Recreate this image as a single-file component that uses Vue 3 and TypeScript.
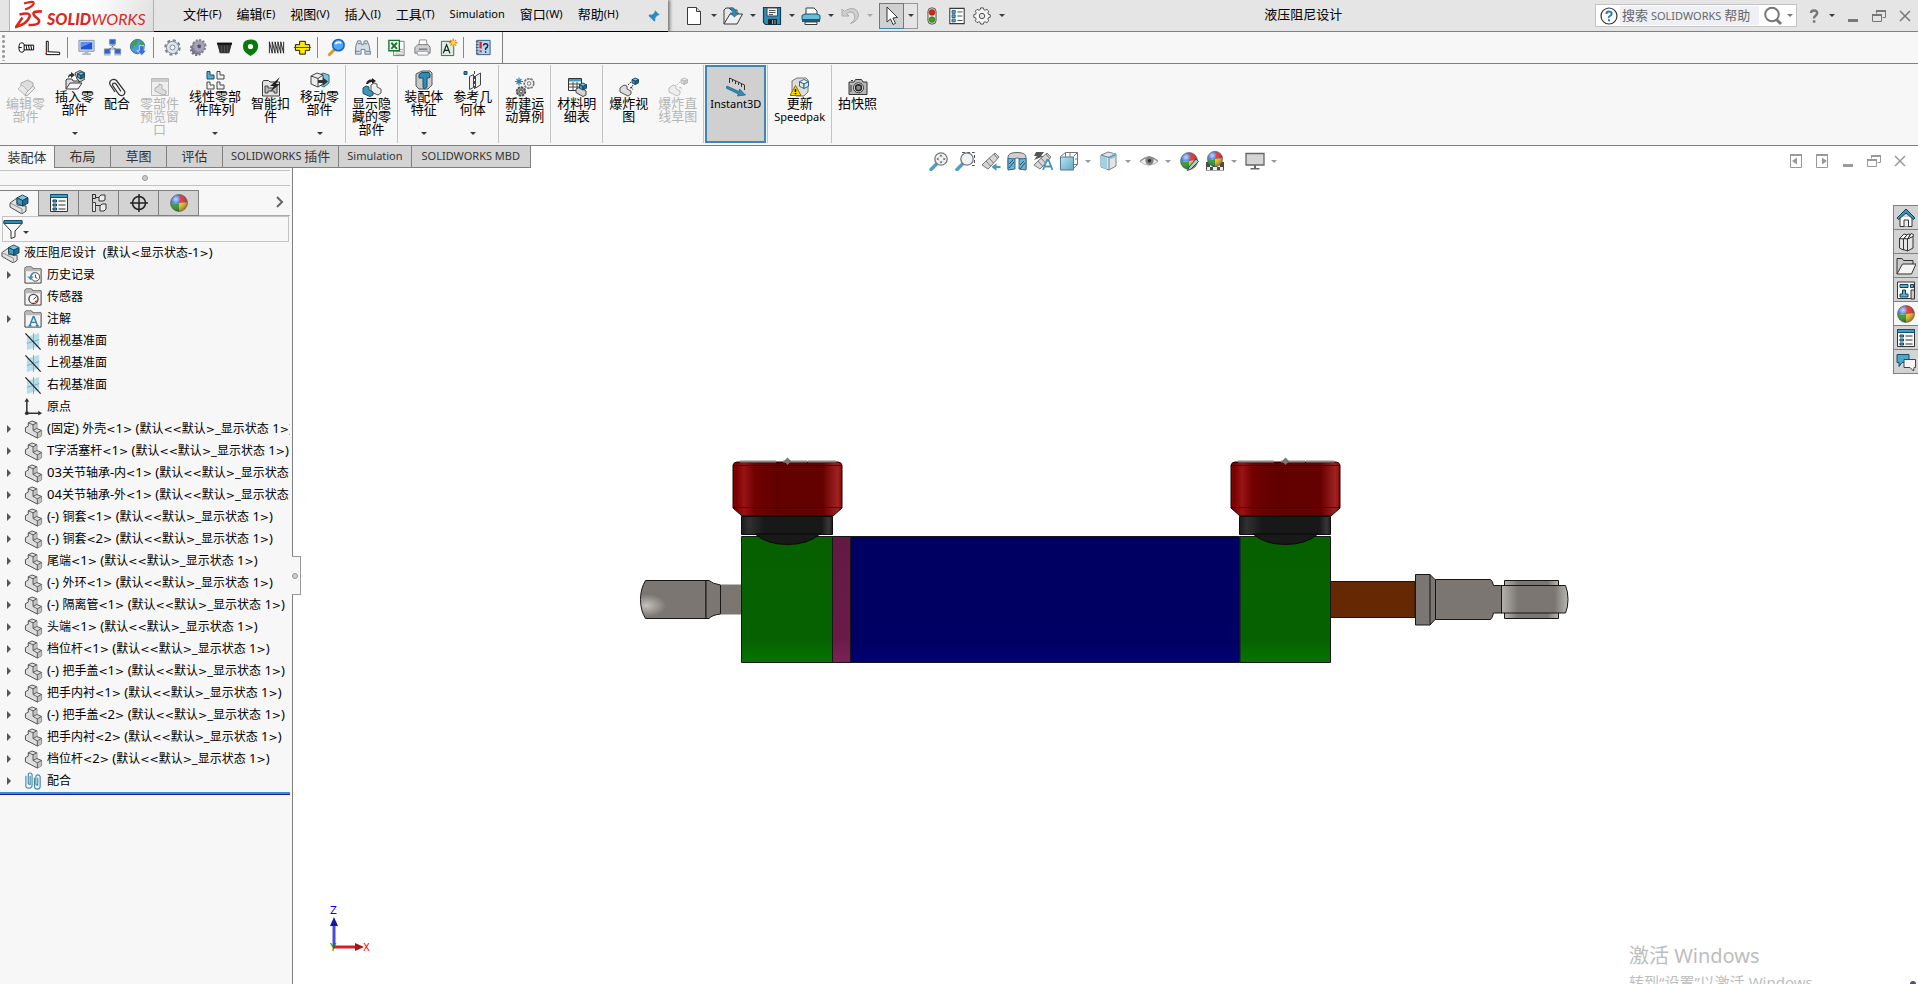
<script setup lang="ts">
import { h } from 'vue'

/* Splits a label into CJK, Latin and angle-bracket runs so each can take its own size. */
const Txt = (props: { t: string }) =>
  (props.t.match(/[\u2e80-\uffff]+|[<>]+|[^\u2e80-\uffff<>]+/g) ?? []).map((s) =>
    h('span', { class: /[<>]/.test(s) ? 'run-angle' : /[\u2e80-\uffff]/.test(s) ? 'run-cjk' : 'run-latin' }, s),
  )
Txt.props = ['t']

const D = '#3a3a3a'
const cube = (x: number, y: number, s: number, top = '#7cc4e0', left = '#3f9cc4', right = '#1f6f95', line = '#123f56') => {
  const q = s / 4
  return `<g transform="translate(${x} ${y})" stroke="${line}" stroke-width=".9" stroke-linejoin="round"><path fill="${top}" d="M0 ${q}L${s / 2} 0L${s} ${q}L${s / 2} ${q * 2}Z"/><path fill="${left}" d="M0 ${q}L${s / 2} ${q * 2}V${s}L0 ${s - q}Z"/><path fill="${right}" d="M${s} ${q}L${s / 2} ${q * 2}V${s}L${s} ${s - q}Z"/></g>`
}
const part = `<path d="M1.500 8L4.500 6.500V3L8.500 1l5 2v6l5 2v5.500l-4.500 2.500L1.500 12.500z" fill="#dedede" stroke="#4c4c4c" stroke-linejoin="round"/><path d="M9.500 5l4-2v6l-4 2zM14 13.500l4.500-2.500v5.500L14 19z" fill="#c2c2c2"/><path d="M4.500 3l5 2 4-2M9.500 5v6l4.500 2.500 4.500-2.500M14 13.500V19M9.500 11l4-2" fill="none" stroke="#4c4c4c" stroke-width=".9"/>`
const assembly = `<path d="M1 9l7-5v7l9 1v5l-4 3L1 13z" fill="#e2e2e2" stroke="#4c4c4c" stroke-linejoin="round"/><path d="M1 9l12 6v5" fill="none" stroke="#8a8a8a"/>${cube(8, 1, 11)}`
const folder = `<path d="M1 18V2l1-1h6l1.500 2H18v15z" fill="#f4f4f4" stroke="${D}"/><path d="M1.500 5.500V2l.5-.5h5.500L9 3.500h8.500v2z" fill="#b9b9b9"/>`
const gear = (fill: string, stroke: string) =>
  `<circle cx="10" cy="10" r="7.500" fill="none" stroke="${stroke}" stroke-width="2.400" stroke-dasharray="3.200 2.690"/><circle cx="10" cy="10" r="6.400" fill="${fill}" stroke="${stroke}"/><circle cx="10" cy="10" r="2.600" fill="#f4f4f4" stroke="${stroke}"/>`
const ball = `<path d="M10 10V1.500a8.500 8.500 0 0 0-8.500 8q4 1.500 8.500.5z" fill="#2f62d8"/><path d="M10 1.500a8.500 8.500 0 0 1 8.500 8L10 10z" fill="#d92a2a"/><path d="M1.500 9.500q4 1.500 8.500.5v8.500a8.500 8.500 0 0 1-8.500-9z" fill="#25962b"/><path d="M10 10l8.500-.5a8.500 8.500 0 0 1-8.500 9z" fill="#efbe25"/><circle cx="10" cy="10" r="8.500" fill="url(#shine)" stroke="#555" stroke-width=".6"/>`
const lens = (inner: string) =>
  `<path d="M2 18.500l6-6" stroke="#4f9fc0" stroke-width="3.400" stroke-linecap="round"/><circle cx="12" cy="8" r="6.200" fill="#eef3f5" stroke="#777" stroke-width="1.300"/>${inner}`
const scope = `<path d="M1 14l4-4 9-8 4 4-8 9-3 3z" fill="#d6d6d6" stroke="#777"/><path d="M8 7l4.500 5M5 10l4.500 5M13 3l3.500 4.500" stroke="#777"/>`

const icons: Record<string, string> = {
  pin: `<path d="M11.500 3l5.500 5.500-1.500 1-1-.4-3 3.400.2 3-1.400 1.400-3.600-3.700L2.500 18l4-5-3.400-3.400L4.500 8l3 .3 3.500-3-.5-1z" fill="#2d8bc0"/>`,
  newdoc: `<path d="M3.500 1.500h9l4 4v13h-13z" fill="#fff" stroke="${D}"/><path d="M12.500 1.500v4h4" fill="#ddd" stroke="${D}"/>`,
  open: `<path d="M1 18V4l2-2h3l2 2h6v4" fill="#e8e8e8" stroke="${D}"/><path d="M1 18L7 8h12.500L14 18z" fill="#f1f1f1" stroke="${D}"/><path d="M6 2q6-2 7 5h3l-4.500 4L7 7h3q-1-4-4-5z" fill="#2f8db5" stroke="#14506b" stroke-width=".6"/>`,
  save: `<path d="M1.500 1.500h17v17h-15l-2-2z" fill="#2f8db5" stroke="#123f56" stroke-width="1.200"/><path d="M5 2h10.500v8H5z" fill="#f4f4f4" stroke="#444"/><path d="M7 4.500h6.500M7 6.500h6.500M7 8.500h4" stroke="#555"/><path d="M6 13h9v5.500H6z" fill="#222"/><path d="M10 14h1v4h-1zM12.500 14h1v4h-1z" fill="#9ab"/>`,
  print: `<path d="M5 9V2h8l3 3v4z" fill="#fff" stroke="${D}"/><path d="M1 9.500l3-1.500h12l3 1.500v4H1z" fill="#6bbcd9" stroke="#14506b"/><path d="M1 13.500h18v2.500H1z" fill="#17607f"/><path d="M4 16h12v2.500H4z" fill="#fff" stroke="${D}"/>`,
  undo: `<path d="M2 3v7h7l-2.500-2.500Q13 4 14.500 9t-4 8.500Q18 15 18.500 9 17.500 1.500 10 2.800 6.500 3.500 4.500 5.500z" fill="#d0d0d0" stroke="#aaa"/>`,
  cursor: `<path d="M5 1v15l3.500-3 2.500 5.500 2.500-1.200-2.600-5.300 4.600-.5z" fill="#fff" stroke="#333" stroke-linejoin="round"/>`,
  traffic: `<rect x="5.500" y="1" width="9" height="18" rx="4" fill="#e6e6e6" stroke="#444"/><circle cx="10" cy="6" r="3.200" fill="#d9260b" stroke="#7d1304" stroke-width=".6"/><circle cx="10" cy="14" r="3.200" fill="#38a313" stroke="#1b5c07" stroke-width=".6"/>`,
  list: `<path d="M2 1.500h16v17H2z" fill="#fdfdfd" stroke="${D}" stroke-width="1.200"/><path d="M4.500 4h3.500v3H4.500zM4.500 8.700h3.500v3H4.500zM4.500 13.500h3.500v3H4.500z" fill="#6bbcd9" stroke="#14506b"/><path d="M10.500 5.500h5.500M10.500 10h5.500M10.500 15h5.500" stroke="${D}"/>`,
  gearline: `<path d="M8.500 1h3l.6 2 1.500.6 1.900-1 2 2-1 1.900.6 1.500 2 .6v2.800l-2 .6-.6 1.500 1 1.900-2 2-1.900-1-1.500.6-.6 2h-3l-.6-2-1.500-.6-1.900 1-2-2 1-1.900-.6-1.500-2-.6V8.600L3 8l.6-1.500-1-1.900 2-2 1.900 1L8 3z" fill="#f4f4f4" stroke="#444" stroke-linejoin="round"/><circle cx="10" cy="10" r="3" fill="#e6e6e6" stroke="#444"/>`,
  help: `<circle cx="10" cy="10" r="8" fill="#fff" stroke="#333" stroke-width="1.200"/><path d="M7.300 8Q7.500 5.500 10 5.500t2.700 2.200Q12.700 9 11 10t-1 1.800" fill="none" stroke="#2a80ab" stroke-width="2"/><path d="M9 13.300h2v2H9z" fill="#2a80ab"/>`,
  search: `<circle cx="9" cy="8.500" r="6.800" fill="none" stroke="#777" stroke-width="2"/><path d="M13.500 13.500l4.500 4.500" stroke="#777" stroke-width="3"/>`,
  quest: `<path d="M7 7Q7 4.500 10 4.500t3.200 2.500Q13.200 8.500 11.500 9.700T10.100 12.500" fill="none" stroke="#777" stroke-width="2.400"/><path d="M8.800 14.300h2.600v2.400H8.800z" fill="#777"/>`,
  min: `<path d="M5 13h10v3H5z" fill="currentColor"/>`,
  restore: `<path d="M7.500 7.500v-3h9v7h-3" fill="none" stroke="currentColor"/><path d="M7 4h10v2H7zM3 8h10v2H3z" fill="currentColor"/><path d="M3.500 8.500h9v7h-9z" fill="none" stroke="currentColor"/>`,
  close: `<path d="M5 5l10 10M15 5L5 15" stroke="currentColor" stroke-width="1.500"/>`,
  paneL: `<path d="M4.500 3.500h11v13h-11z" fill="none" stroke="currentColor"/><path d="M4 3h12v2H4zM11 6.500v7L6 10z" fill="currentColor"/>`,
  paneR: `<path d="M4.500 3.500h11v13h-11z" fill="none" stroke="currentColor"/><path d="M4 3h12v2H4zM10 6.500v7l5-3.500z" fill="currentColor"/>`,
  screw: `<ellipse cx="5" cy="10" rx="3" ry="5" fill="#fff" stroke="#000"/><path d="M7.500 7.500h10v5h-10z" fill="#fff" stroke="#000"/><path d="M9.500 7.500l1 5M12 7.500l1 5M14.500 7.500l1 5M2 10h3" fill="none" stroke="#000"/>`,
  angle: `<path d="M3.500 3.500h2v11l12 .5v2.500H3.500z" fill="#fff" stroke="#000"/><path d="M2 17l3-3" stroke="#e33"/>`,
  monitor: `<path d="M2 2.500h16v11.500H2z" fill="#cfd8e4" stroke="#8795a8"/><path d="M4 4.500h12v7.500H4z" fill="#1f55d6"/><path d="M4 4.500h12L4 10z" fill="#5f92ee"/><path d="M8 14h4v2H8zM5.500 16h9v2h-9z" fill="#aeb8c4"/>`,
  net: `<path d="M10 6v5M4 13l6-3 6 3" stroke="#333" fill="none"/><path d="M7 1.500h6v5H7zM1.500 11.500h6v5h-6zM12.500 11.500h6v5h-6z" fill="#2c62d2" stroke="#7b8ba3"/><path d="M7 7h6v1.500H7zM1 17h7v1.500H1zM12 17h7v1.500h-7z" fill="#a7b1bd"/><circle cx="10" cy="11" r="2" fill="#aac0d8"/>`,
  globe: `<circle cx="9" cy="9" r="7.500" fill="#4c98e8" stroke="#2b62a8"/><path d="M4 4q4-3 6-1l-2 4-3 1-1 4-2-4zM11 5l4-1 1 4-4 1z" fill="#3da441"/><path d="M11 8h5v5h2.500l-5 5.500-5-5.500H11z" fill="#3f6fd6" stroke="#fff" stroke-width=".7"/>`,
  gear1: gear('#dfe4ea', '#7d8794'),
  gear2: `<g transform="rotate(-15 10 10)"><circle cx="8" cy="11" r="6" fill="#777389" stroke="#777389" stroke-width="3" stroke-dasharray="2 1.500"/><circle cx="11" cy="9" r="6.500" fill="#a5a2b3" stroke="#86839a" stroke-width="2.500" stroke-dasharray="2 1.500"/><circle cx="11" cy="9" r="2" fill="#555166"/></g>`,
  bucket: `<path d="M2 5h16l-3 11H5z" fill="#333"/><path d="M2 5h16l-.5 2h-15z" fill="#111"/><path d="M7 8v7M10 8v7M13 8v7" stroke="#555"/>`,
  cam: `<path d="M10 1.500q8 0 8 7 0 6-6 9l-2 1.500-2-1.500q-6-3-6-9 0-7 8-7z" fill="#087a0c"/><circle cx="10" cy="9" r="2.700" fill="#fff"/>`,
  spring: `<path d="M2.500 16V4l3 12V4l3 12V4l3 12V4l3 12V4l3 12V4" fill="none" stroke="#222"/>`,
  cross: `<path d="M7 3.500h6v3.500h4.500v6H13v4H7v-4H2.500V7H7z" fill="#ffe80a" stroke="#111"/><path d="M1 10h18" stroke="#d00"/>`,
  lensBlue: `<path d="M2.500 17.500l5-5" stroke="#d99a2c" stroke-width="3" stroke-linecap="round"/><circle cx="12" cy="7.500" r="6" fill="#4fa8f4" stroke="#1c5fbf" stroke-width="1.600"/><path d="M8.500 6.500q3-3.500 6.500-1" fill="none" stroke="#e5f4ff" stroke-width="2"/>`,
  binoc: `<path d="M3 8l2-5h3l1 4h2l1-4h3l2 5 1.500 9h-6v-5h-4v5h-6z" fill="#d5dde6" stroke="#6c7c8e"/><path d="M2 14h5M13 14h5M5 6h3M12 6h3" stroke="#6c7c8e"/>`,
  excel: `<path d="M7 3.500h11v15H7z" fill="#fff" stroke="#777"/><path d="M9 12h8M9 14.500h8M9 17h8" stroke="#999"/><path d="M2 2.500h11v11H2z" fill="#fff" stroke="#16762b" stroke-width="1.500"/><path d="M4.500 5l6 6.500M10.500 5l-6 6.500" stroke="#16762b" stroke-width="2"/>`,
  printer: `<path d="M6 8l1-6h7l1 6z" fill="#fff" stroke="#888"/><path d="M2 10l3-3h11l2 3v6H2z" fill="#ccd0d4" stroke="#777"/><path d="M4 14h12v4H5z" fill="#f8f8f8" stroke="#999"/><path d="M6 11h9v1.500H6z" fill="#777"/>`,
  anote: `<path d="M2.500 3.500h13v15h-13z" fill="#d8efe2" stroke="#555"/><path d="M4.500 16l3.500-9 3.500 9M5.500 13h5" fill="none" stroke="#222" stroke-width="1.300"/><path d="M15 .5v9M10.500 5h9M12 2l6 6M18 2l-6 6" stroke="#e78f1c" stroke-width="1.400"/><circle cx="15" cy="5" r="2" fill="#ffd54a"/>`,
  bookq: `<path d="M4 2.500h14v15H4z" fill="#b6d4ea" stroke="#2a5c88"/><path d="M3 4h3M3 7h3M3 10h3M3 13h3M3 16h3" stroke="#555"/><path d="M8 4v7" stroke="#d22" stroke-width="2.400"/><path d="M8 13v2" stroke="#d22" stroke-width="2.400"/><path d="M11 8q0-2 2.300-2t2.200 2-2.200 3v1.500M13.300 14v1.500" fill="none" stroke="#225" stroke-width="1.500"/>`,
  editpart: `<path d="M5 6l7-3 5 3v6l-6 3-6-4z" fill="#ddd" stroke="#aaa"/><path d="M2 12l4-4 8 8-4 3z" fill="#e8e8e8" stroke="#bbb"/><path d="M17 9l2 2-7 7-3 1 1-3z" fill="#eee" stroke="#aaa"/>`,
  insert: `<path d="M1 19V10l1-1h5l1 2h6v2" fill="#ddd" stroke="${D}"/><path d="M1 19l4-6h12l-4 6z" fill="#f4f4f4" stroke="${D}"/><path d="M3 8q0-4 3-4V2l4 3-4 3V6Q4.500 6 3 8z" fill="#333"/><path d="M10 3l5-2.500 5 2.500v6l-5 3-3-3z" fill="#ccc" stroke="#444"/>${cube(12.5, 2, 7)}`,
  clip: `<path d="M8 15L3 7.500Q2 4.500 4.500 3t5 .5l8 10.500q1 2.500-1 4t-4.500-.5L6 9q-1-2 .3-2.700T9 7l5 7.500" fill="none" stroke="#333" stroke-width="1.300"/>`,
  preview: `<path d="M1.500 1.500h17v17h-17z" fill="#eee" stroke="#bbb"/><path d="M2 2h16v3H2z" fill="#ccc"/><path d="M5 11l4-2V7l3 1v4l4 2v3l-3 1-8-4z" fill="#ddd" stroke="#b0b0b0"/>`,
  pattern: `<path d="M2 1.500h3V5h4v4H2z" fill="#59b0d2" stroke="#14506b"/><path d="M12 1.500h3V5h4v4h-7zM2 12h3v3h4v4H2zM12 12h3v3h4v4h-7z" fill="#f2f2f2" stroke="#444"/>`,
  smart: `<path d="M1.500 19V5l1-1.500h5L9 5h9.500v14z" fill="#e2e2e2" stroke="${D}"/><path d="M4 9h3v2h6V9h3v7h-3v-2H7v2H4z" fill="#bbb" stroke="#444"/><path d="M19 0L9 9h4l-4 6 10-8h-4z" fill="#222"/>`,
  move: `<path d="M8 6l5-3 6 2v8l-5 4-6-3z" fill="#7cc4e0" stroke="#2c6e8d"/><path d="M1 6l6-3 6 2v9l-5 3-7-3z" fill="#ececec" stroke="#444"/><path d="M1 6l7 2.500L13 5M8 8.500V17" fill="none" stroke="#444"/><path d="M8 10h5V7.500l5 4-5 4V13H8z" fill="#333"/>`,
  showhide: `<path d="M4 7Q5 2 10 2.500V1l4 3-4 3V5Q7 5 6 7z" fill="#222"/><path d="M9 8l3-2 3 1v3l4 2v4l-3 2-7-3z" fill="#eee" stroke="#555"/><path d="M1 11l3-2 3 1v3l4 2v3l-3 1.500-7-3z" fill="#3f94b8" stroke="#14506b"/>`,
  feature: `<path d="M2 4l6-3h8l2 2v12l-4 4H5l-3-3z" fill="#c9c9c9" stroke="#555"/><path d="M5 4.500l3-2h7l1 2v3l-3 .5v9l-3 2-1-2V8L5 8z" fill="#2f8db5" stroke="#14506b"/>`,
  refgeo: `<path d="M1 1.500h3v3H1z" fill="#2f8db5" stroke="#14506b"/><path d="M6.500 6.500l4-2v13l-4 2zM12.500 6l5-3v12l-5 3z" fill="#eee" stroke="#444"/><path d="M11.500 1v18" stroke="#444" stroke-dasharray="3 2"/>`,
  motion: `<path d="M4 .5v8M0 4.500h8M1.500 2l5 5M6.500 2l-5 5" stroke="#2a80ab" stroke-width="1.100"/><circle cx="14" cy="6.500" r="4.600" fill="#f0f0f0" stroke="#777" stroke-width="2" stroke-dasharray="2.400 .8"/><circle cx="14" cy="6.500" r="3.800" fill="#f4f4f4"/><circle cx="14" cy="6.500" r="1.800" fill="#fff" stroke="#777"/><circle cx="6" cy="14.500" r="4.200" fill="#999" stroke="#555" stroke-width="2" stroke-dasharray="2.400 .8"/><circle cx="6" cy="14.500" r="1.500" fill="#eee" stroke="#444"/>`,
  bom: `<path d="M1.500 1.500h13v12h-13z" fill="#fff" stroke="#333"/><path d="M2 2h12v2.500H2z" fill="#3f9cc4"/><path d="M2 7h12M2 10h12M6 5v8M10 5v8" stroke="#444"/><path d="M9 12l4-2 6 4v4l-3 1.500-7-4z" fill="#d5d5d5" stroke="#444"/>${cube(12.5, 6, 7)}`,
  explode: `<path d="M1 11l4-3 3 1v3l4 2v3l-3 2-8-4z" fill="#ddd" stroke="#555"/><path d="M9 8l3-3M11 11l3-1M14 8l-2 3M12 10l2 3" stroke="#333" stroke-dasharray="2 1"/>${cube(13, 1, 6.5)}`,
  explodeline: `<path d="M1 11l4-3 3 1v3l4 2v3l-3 2-8-4z" fill="#eee" stroke="#bbb"/><path d="M9 8l3-3M11 11l3-1M12 10l2 3" stroke="#bbb" stroke-dasharray="2 1"/>${cube(13, 1, 6.5, '#eee', '#ddd', '#ccc', '#b5b5b5')}`,
  instant: `<path d="M3.500 6V1l15 7v5M6.500 2.500V5M9.500 4v3M12.500 5.500V8M15.500 7v3" fill="none" stroke="#333"/><path d="M1 9l12 5.500.6-2.500L19.500 18l-8 1 .8-2L0 11z" fill="#2f8db5" stroke="#14506b" stroke-width=".6"/>`,
  speedpak: `<path d="M2 4l5-3h9l2 2v12l-4 4H6l-4-4z" fill="#ddd" stroke="#777"/>${cube(9.5, 2.5, 9, '#fff', '#e9e9e9', '#d6e6ee', '#1d5d7c')}<path d="M5.500 8.500l5.500 10H0z" fill="#ffd200" stroke="#8a6d00" stroke-linejoin="round"/><path d="M5.500 12v3M5.500 16v1.200" stroke="#000" stroke-width="1.500"/>`,
  camera: `<path d="M1 5h5l1.500-2.500h6L15 5h4v12.500H1z" fill="#b8b8b8" stroke="#333"/><circle cx="10.500" cy="10.800" r="5" fill="#eee" stroke="#333"/><circle cx="10.500" cy="10.800" r="3" fill="#888" stroke="#222" stroke-width="1.400"/><path d="M3 3.500h2M3 8v7" stroke="#333"/>`,
  zoomfit: lens('<path d="M12 3.500l1.500 2h-3zM12 12.500l1.500-2h-3zM7.500 8l2-1.500v3zM16.500 8l-2-1.500v3z" fill="#555"/>'),
  zoomarea: `<path d="M7 1.500h12.500v13H15" fill="none" stroke="#555" stroke-dasharray="3 2"/>${lens('')}`,
  prev: `${scope}<path d="M19.500 15h-4v-2.800L10.500 16l5 3.700V17h4z" fill="#4795b8"/>`,
  section: `<path d="M1 6q0-4.500 9-4.500T19 6v12l-4.500.5V8q-4-2-9 0v10.500L1 18z" fill="#cfcfcf" stroke="#666"/><path d="M1 7.500l7 .5v10l-7 1zM12 8l7-.5V19l-7-1z" fill="#6fb4d0" stroke="#2c6e8d"/><path d="M2 13l4-4M2 17l5-6M13 14l4-4M13 18l5-6" stroke="#17506b"/>`,
  anno: `${scope}<path d="M3 1h8L8 5h3L1 9l3-4H1z" fill="#555"/><path d="M10 19l4-10h1.500l4 10M12 15.500h6" fill="none" stroke="#4795b8" stroke-width="1.800"/>`,
  orient: `<path d="M6.500 1.500h12v12h-12z" fill="#fff" stroke="#777"/><path d="M6.500 1.500l-5 4M18.500 1.500l-4 4M18.500 13.500l-4 4M11 2v4M16 8h2" stroke="#777"/><path d="M1.500 6h13v13h-13z" fill="url(#blueface)" stroke="#4b7d93"/>`,
  display: `<path d="M2 4l7-3 8 2v12l-7 4-8-3z" fill="#e4e4e4" stroke="#6a8794"/><path d="M2 4l6 2v12.500L2 16z" fill="#9fd2e4"/><path d="M8 6l5-2V1.700l4 1.500V6l-5 2z" fill="#8cc6dc"/><path d="M2 4l8 2.500 7-3M10 6.500V19" fill="none" stroke="#6a8794"/>`,
  eye: `<path d="M1 10.500Q10 1 19 10.500 10 18 1 10.500z" fill="#eee" stroke="#bbb"/><path d="M1 10.500Q10 2 19 10.500" fill="none" stroke="#999" stroke-width="1.500"/><circle cx="10.500" cy="9.800" r="4.200" fill="#858585"/><circle cx="10.500" cy="9.800" r="1.800" fill="#333"/>`,
  ballpen: `${ball}<path d="M17 8l2.500 2.500L12 18l-3.500 1.500L10 16z" fill="#9ecfe4" stroke="#444"/>`,
  scene: `<path d="M1 11h18v8.500H1z" fill="#4a4a4a"/><path d="M2 16h3v3H2zM8 16h4v3H8zM15 16h3v3h-3zM5 13h3v3H5zM12 13h3v3h-3z" fill="#eee"/><g transform="translate(1 -1) scale(.9)">${ball}</g>`,
  screen: `<path d="M1 2.500h18v11.500H1z" fill="#d5d5d5" stroke="#666" stroke-width="1.300"/><path d="M9 14h2v3h3.500v1.500h-9V17H9z" fill="#666"/>`,
  house: `<path d="M4 9v9.500h12V9" fill="#fff" stroke="#333"/><path d="M8 18.500V12h4.500v6.500" fill="#eee" stroke="#333"/><path d="M10 1L1 10l1.500 1.500L10 5l7.500 6.500L19 10z" fill="#3f94b8" stroke="#123f56"/>`,
  books: `<path d="M3.500 6.500h4v11.500l-4-2zM7.500 6.500h4V19l-4-1.500zM11.500 7l5.500-3v12l-5.500 3z" fill="#e4e4e4" stroke="#333" stroke-linejoin="round"/><path d="M3.500 6.500L8 2l3 1-3.500 4zM7.500 6.500L12 2l2.500.5-3 4.500zM11.500 7L15 1.500l2.500 1-.5 2z" fill="#fff" stroke="#333" stroke-linejoin="round"/>`,
  folderopen: `<path d="M1 18V2.500h5l1.500 2H17V8" fill="#c9c9c9" stroke="#333"/><path d="M1 18L6.500 8H20l-4.500 10z" fill="#f4f4f4" stroke="#333"/>`,
  palette: `<path d="M1.500 2h17v16.500h-17z" fill="#fff" stroke="#333"/><path d="M4 4.500h8v3H4zM14.500 4.500h3v3h-3zM6.500 10h3v4H12v3H4v-3h2.500z" fill="#59b0d2" stroke="#123f56"/><path d="M15 10h3.500v9H15z" fill="#ccc" stroke="#333"/>`,
  ball,
  props: `<path d="M1.500 1.500h17v17h-17z" fill="#f7f7f7" stroke="#333"/><path d="M1.500 1.500h17v3h-17z" fill="#3f9cc4" stroke="#14506b"/><path d="M4 7h3.500v2H4zM4 11h3.500v2H4zM4 15h3.500v2H4z" fill="#59b0d2" stroke="#123f56"/><path d="M9.500 8h7M9.500 12h7M9.500 16h7" stroke="#333"/>`,
  chat: `<path d="M1 2.500h12v8H6l-3 4v-4H1z" fill="#4fa6c9" stroke="#14506b"/><path d="M8 7.500h11.500v8H18l-.5 3.500-3.500-3.500H8z" fill="#f6f6f6" stroke="#444"/>`,
  assembly,
  part,
  config: `<path d="M3.500 1v18M3.500 1.500h3v4h-3M7 4.500h5M7 12.500h5" stroke="#333" fill="none"/><path d="M3.500 9.500h3v9h-3z" fill="#e5e5e5" stroke="#444"/><path d="M10 4l2-2h4v5l-2 1h-4zM11 13l2-2h4v5l-2 2h-4z" fill="#eee" stroke="#333"/>`,
  target: `<circle cx="10" cy="10" r="6.500" fill="none" stroke="#222" stroke-width="1.500"/><path d="M10 1v18M1 10h18" stroke="#222" stroke-width="1.500"/>`,
  filter: `<path d="M1 2h18v2.500L12 12v6l-4 1.500V12L1 4.500z" fill="#f7f7f7" stroke="#333"/><path d="M1 1.500h18V4.500H1z" fill="#2f8db5" stroke="#14506b"/>`,
  history: `${folder}<circle cx="12" cy="11.500" r="4.500" fill="#fff" stroke="#444"/><path d="M12 9v3l2 1" fill="none" stroke="#333"/><path d="M3.500 11h7L7 15z" fill="#3f94b8"/><path d="M7 12q0-4 3.500-5" fill="none" stroke="#3f94b8" stroke-width="1.500"/>`,
  sensor: `${folder}<circle cx="10" cy="11.500" r="4.800" fill="#fff" stroke="#444" stroke-width="1.400"/><path d="M10 12l3-3" stroke="#222"/><path d="M11 14l4-2-1.500 4z" fill="#d32"/>`,
  notes: `${folder}<path d="M6 16.500L9.700 7h.8l3.700 9.500M7.500 13h5.200M4.800 16.500h3M12.500 16.500h3" fill="none" stroke="#2a80ab" stroke-width="1.500"/>`,
  plane: `<path d="M3 5l13-4v14L3 19z" fill="#b7dcea"/><path d="M10 1v18M3 12l13-4" stroke="#82a9b8"/><path d="M1.500 1.500l16 17" stroke="#222" stroke-width="1.300"/>`,
  origin: `<path d="M3 3v13h13" fill="none" stroke="#333" stroke-width="1.600"/><path d="M3 0l2.500 4h-5zM19 16l-4-2.500v5z" fill="#333"/><circle cx="3" cy="16" r="2" fill="#333"/>`,
  mates: `<path d="M6 5v9q-2 0-2-1V4q0-2 2-2t2 2v11q0 3-3.500 3T1.500 15V5M14 7v8q-2 0-2-1V6q0-2 2-2t2.500 2v10q0 3-3 3t-3-3V7" transform="translate(.5 -1)" fill="none" stroke="#3f87a8" stroke-width="1.200"/>`,
}

const menus = ['文件(F)', '编辑(E)', '视图(V)', '插入(I)', '工具(T)', 'Simulation', '窗口(W)', '帮助(H)']
const quick = [
  { id: 'newdoc', label: '新建' },
  { id: 'open', label: '打开' },
  { id: 'save', label: '保存' },
  { id: 'print', label: '打印' },
  { id: 'undo', label: '撤销', off: true },
]
const tools = [
  ['screw', 'angle'],
  ['monitor', 'net', 'globe'],
  ['gear1', 'gear2', 'bucket', 'cam', 'spring', 'cross'],
  ['lensBlue', 'binoc'],
  ['excel', 'printer', 'anote'],
  ['bookq'],
]
interface Cmd { icon: string; text: string; drop?: boolean; off?: boolean; on?: boolean }
const ribbon: Cmd[][] = [
  [
    { icon: 'editpart', text: '编辑零\n部件', off: true },
    { icon: 'insert', text: '插入零\n部件', drop: true },
    { icon: 'clip', text: '配合' },
    { icon: 'preview', text: '零部件\n预览窗\n口', off: true },
    { icon: 'pattern', text: '线性零部\n件阵列', drop: true },
    { icon: 'smart', text: '智能扣\n件' },
    { icon: 'move', text: '移动零\n部件', drop: true },
  ],
  [{ icon: 'showhide', text: '显示隐\n藏的零\n部件' }],
  [
    { icon: 'feature', text: '装配体\n特征', drop: true },
    { icon: 'refgeo', text: '参考几\n何体', drop: true },
  ],
  [{ icon: 'motion', text: '新建运\n动算例' }],
  [{ icon: 'bom', text: '材料明\n细表' }],
  [
    { icon: 'explode', text: '爆炸视\n图' },
    { icon: 'explodeline', text: '爆炸直\n线草图', off: true },
  ],
  [{ icon: 'instant', text: 'Instant3D', on: true }],
  [{ icon: 'speedpak', text: '更新\nSpeedpak' }],
  [{ icon: 'camera', text: '拍快照' }],
]
const tabs = ['装配体', '布局', '草图', '评估', 'SOLIDWORKS 插件', 'Simulation', 'SOLIDWORKS MBD']
const hud = [
  { id: 'zoomfit' }, { id: 'zoomarea' }, { id: 'prev' }, { id: 'section' }, { id: 'anno' },
  { id: 'orient', drop: true }, { id: 'display', drop: true }, { id: 'eye', drop: true },
  { id: 'ballpen' }, { id: 'scene', drop: true }, { id: 'screen', drop: true },
]
const docControls = ['paneL', 'paneR', 'min', 'restore', 'close']
const taskPane = ['house', 'books', 'folderopen', 'palette', 'ball', 'props', 'chat']
const panelTabs = ['assembly', 'props', 'config', 'target', 'ball']

const st = ' (默认<<默认>_显示状态 1>)'
const tree = [
  { icon: 'history', text: '历史记录', arrow: true },
  { icon: 'sensor', text: '传感器' },
  { icon: 'notes', text: '注解', arrow: true },
  { icon: 'plane', text: '前视基准面' },
  { icon: 'plane', text: '上视基准面' },
  { icon: 'plane', text: '右视基准面' },
  { icon: 'origin', text: '原点' },
  ...[
    '(固定) 外壳<1>' + st,
    'T字活塞杆<1>' + st,
    '03关节轴承-内<1> (默认<<默认>_显示状态',
    '04关节轴承-外<1> (默认<<默认>_显示状态',
    '(-) 铜套<1>' + st,
    '(-) 铜套<2>' + st,
    '尾端<1>' + st,
    '(-) 外环<1>' + st,
    '(-) 隔离管<1>' + st,
    '头端<1>' + st,
    '档位杆<1>' + st,
    '(-) 把手盖<1>' + st,
    '把手内衬<1>' + st,
    '(-) 把手盖<2>' + st,
    '把手内衬<2>' + st,
    '档位杆<2>' + st,
  ].map((text) => ({ icon: 'part', text, arrow: true })),
  { icon: 'mates', text: '配合', arrow: true },
]
</script>

<template>
  <div class="app">
    <svg class="defs" aria-hidden="true">
      <defs>
        <radialGradient id="shine" cx=".32" cy=".28" r=".75">
          <stop offset="0" stop-color="#fff" stop-opacity=".75" />
          <stop offset=".4" stop-color="#fff" stop-opacity=".1" />
          <stop offset="1" stop-color="#000" stop-opacity=".35" />
        </radialGradient>
        <linearGradient id="blueface" x1="0" y1="0" x2="1" y2="1">
          <stop offset="0" stop-color="#bfe2ee" />
          <stop offset="1" stop-color="#5fa9c6" />
        </linearGradient>
      </defs>
    </svg>

    <header class="titlebar">
      <div class="logo">
        <svg viewBox="0 0 30 30" aria-hidden="true">
          <path d="M9 3.500Q20 0 18.500 4 17 7 10 9.500" fill="none" stroke="#da291c" stroke-width="2.200" />
          <path d="M4.500 14.500Q16 11.500 14.500 17 12 24 1 27L7.500 17.500" fill="none" stroke="#da291c" stroke-width="2.500" />
          <path d="M27 11.500Q18 11 18.500 14 19 16 22.500 18.500 25.500 21 23 23.500 20 25.500 13.500 24.800" fill="none" stroke="#da291c" stroke-width="2.700" />
        </svg>
        <span class="word"><b>SOLID</b><i>WORKS</i></span>
      </div>
      <nav class="menus">
        <button v-for="m in menus" :key="m"><Txt :t="m" /></button>
        <button class="pin" aria-label="固定菜单"><svg viewBox="0 0 20 20" v-html="icons.pin" /></button>
      </nav>
      <div class="quick">
        <template v-for="q in quick" :key="q.id">
          <button class="ico" :aria-label="q.label"><svg viewBox="0 0 20 20" v-html="icons[q.id]" /></button>
          <button class="drop" :class="{ off: q.off }" :aria-label="q.label + '选项'"></button>
        </template>
        <button class="select on" aria-label="选择"><svg viewBox="0 0 20 20" v-html="icons.cursor" /></button>
        <button class="select drop" aria-label="选择选项"></button>
        <div class="extra">
          <button class="ico" aria-label="重建"><svg viewBox="0 0 20 20" v-html="icons.traffic" /></button>
          <button class="ico" aria-label="文件属性"><svg viewBox="0 0 20 20" v-html="icons.list" /></button>
          <button class="ico" aria-label="选项"><svg viewBox="0 0 20 20" v-html="icons.gearline" /></button>
        </div>
        <button class="drop" aria-label="更多选项"></button>
      </div>
      <h1><Txt t="液压阻尼设计" /></h1>
      <form class="search">
        <svg viewBox="0 0 20 20" v-html="icons.help" />
        <label class="field">
          <input type="search" aria-label="搜索 SOLIDWORKS 帮助" placeholder=" " />
          <span class="hint"><Txt t="搜索 SOLIDWORKS 帮助" /></span>
        </label>
        <button type="button" class="ico" aria-label="搜索"><svg viewBox="0 0 20 20" v-html="icons.search" /></button>
        <button type="button" class="drop" aria-label="搜索范围"></button>
      </form>
      <div class="wincontrols">
        <button class="ico" aria-label="帮助"><svg viewBox="0 0 20 20" v-html="icons.quest" /></button>
        <button class="drop" aria-label="帮助选项"></button>
        <button class="win" aria-label="最小化"><svg viewBox="0 0 20 20" v-html="icons.min" /></button>
        <button class="win" aria-label="还原"><svg viewBox="0 0 20 20" v-html="icons.restore" /></button>
        <button class="win" aria-label="关闭"><svg viewBox="0 0 20 20" v-html="icons.close" /></button>
      </div>
    </header>

    <div class="toolbar">
      <div class="toolset">
        <div class="grip"></div>
        <div v-for="(g, i) in tools" :key="i" class="toolgroup">
          <button v-for="t in g" :key="t" :aria-label="t"><svg viewBox="0 0 20 20" v-html="icons[t]" /></button>
        </div>
      </div>
    </div>

    <div class="ribbon">
      <div v-for="(g, i) in ribbon" :key="i" class="group">
        <button v-for="c in g" :key="c.text" class="cmd" :class="{ off: c.off, on: c.on, hasdrop: c.drop }">
          <svg viewBox="0 0 20 20" v-html="icons[c.icon]" />
          <span class="cap"><Txt :t="c.text" /></span>
          <span v-if="c.drop" class="caret"></span>
        </button>
      </div>
    </div>

    <main class="workspace">
      <div class="tabs" role="tablist">
        <button v-for="(t, i) in tabs" :key="t" role="tab" :class="{ active: i === 0 }"><Txt :t="t" /></button>
      </div>

      <div class="body">
        <aside class="panel">
          <div class="collapse"><span class="dot"></span></div>
          <div class="paneltabs">
            <button v-for="(t, i) in panelTabs" :key="i" :class="{ active: i === 0 }" :aria-label="t">
              <svg viewBox="0 0 20 20" v-html="icons[t]" />
            </button>
            <button class="more" aria-label="更多"><svg viewBox="0 0 20 20"><path d="M7 5l5 5-5 5" fill="none" stroke="#666" stroke-width="2" /></svg></button>
          </div>
          <label class="filter">
            <svg viewBox="0 0 20 20" v-html="icons.filter" />
            <span class="caret"></span>
            <input type="text" aria-label="过滤" />
          </label>
          <ul class="tree">
            <li class="root">
              <svg viewBox="0 0 20 20" v-html="icons.assembly" />
              <span class="name"><Txt t="液压阻尼设计  (默认<显示状态-1>)" /></span>
            </li>
            <li v-for="n in tree" :key="n.text">
              <button v-if="n.arrow" class="arrow" :aria-label="'展开 ' + n.text"></button>
              <span v-else class="noarrow"></span>
              <svg viewBox="0 0 20 20" v-html="icons[n.icon]" />
              <span class="name"><Txt :t="n.text" /></span>
            </li>
          </ul>
          <div class="rollback"></div>
          <div class="handle"><span class="dot"></span></div>
        </aside>

        <section class="stage">
          <svg class="model" viewBox="630 456 951 240" role="img" aria-label="液压阻尼设计">
            <defs>
              <linearGradient id="red">
                <stop offset="0" stop-color="#8a0000" />
                <stop offset=".03" stop-color="#780000" />
                <stop offset=".1" stop-color="#981414" />
                <stop offset=".2" stop-color="#720000" />
                <stop offset=".4" stop-color="#620000" />
                <stop offset=".82" stop-color="#640000" />
                <stop offset=".96" stop-color="#a02222" />
                <stop offset="1" stop-color="#8a0808" />
              </linearGradient>
              <linearGradient id="black">
                <stop offset="0" stop-color="#1c1c1c" />
                <stop offset=".08" stop-color="#303030" />
                <stop offset=".25" stop-color="#181818" />
                <stop offset=".88" stop-color="#181818" />
                <stop offset=".96" stop-color="#383838" />
                <stop offset="1" stop-color="#1c1c1c" />
              </linearGradient>
              <linearGradient id="green" x2="0" y2="1">
                <stop offset="0" stop-color="#066000" />
                <stop offset=".82" stop-color="#066200" />
                <stop offset="1" stop-color="#087400" />
              </linearGradient>
              <linearGradient id="wine" x2="0" y2="1">
                <stop offset="0" stop-color="#641945" />
                <stop offset=".8" stop-color="#681b48" />
                <stop offset="1" stop-color="#7c2257" />
              </linearGradient>
              <linearGradient id="navy" x2="0" y2="1">
                <stop offset="0" stop-color="#000062" />
                <stop offset=".85" stop-color="#000064" />
                <stop offset="1" stop-color="#000074" />
              </linearGradient>
              <radialGradient id="steel" cx=".09" cy=".66" r=".3">
                <stop offset="0" stop-color="#c4c1bd" />
                <stop offset="1" stop-color="#7b7672" />
              </radialGradient>
              <linearGradient id="ring">
                <stop offset="0" stop-color="#b5b1ad" />
                <stop offset=".25" stop-color="#7b7672" />
                <stop offset=".8" stop-color="#7b7672" />
                <stop offset="1" stop-color="#bab7b3" />
              </linearGradient>
              <g id="knob">
                <path d="M733 465q1-3 4-3h101q3 0 4 3v43l-9 8h-91l-9-8z" fill="url(#red)" stroke="#1c0000" />
                <path d="M733 465.500h109M733 507.500h109" stroke="#200" />
                <path d="M740 461.500h36M783 461.500h24M808 461.500h28" stroke="#8a8a8a" stroke-width="2" />
                <path d="M787.500 457.500l3.500 3.500-3.500 4-3.500-4z" fill="#777" />
                <path d="M741.500 516.500h91v18h-91z" fill="url(#black)" stroke="#0c0c0c" />
              </g>
            </defs>
            <g stroke="#171717">
              <path d="M720.500 584.500H742v30h-21.500z" fill="#7b7672" stroke="none" />
              <path d="M645.500 580.500h60.500v38h-60.500q-5-8-5-19t5-19z" fill="url(#steel)" />
              <path d="M706 580.500h3q3 3 11.500 4.500v29q-8.500 1-11.500 4.500h-3z" fill="#7b7672" />
              <path d="M741.500 536.500h91v126h-91z" fill="url(#green)" />
              <path d="M832.500 536.500h18v126h-18z" fill="url(#wine)" />
              <path d="M850.500 536.500h389v126h-389z" fill="url(#navy)" />
              <path d="M1240 536.500h90.500v126H1240z" fill="url(#green)" />
              <path d="M1330.500 581.500H1415v36h-84.500z" fill="#662703" />
              <path d="M1415.500 574.500h14.500l5.500 5.500v39l-5.500 6h-14.500zM1430 574.500v50" fill="#7b7672" />
              <path d="M1435.500 579.500h55q2 1 3 6h8.500v27.500h-8.500q-1 5-3 6.500h-55z" fill="#7b7672" />
              <path d="M1504.500 580.500h54v38h-54z" fill="url(#ring)" />
              <path d="M1501.500 585.500h64q2.500 6 2.500 14t-2.500 13.500h-64z" fill="url(#ring)" />
            </g>
            <use href="#knob" />
            <use href="#knob" x="498" />
            <path d="M755 534h65q-12 10.500-32.500 10.500T755 534zM1253 534h65q-12 10.500-32.500 10.500T1253 534z" fill="#191919" stroke="#080808" />
          </svg>

          <svg class="triad" viewBox="0 0 44 48" aria-hidden="true">
            <path d="M3 41h26" stroke="#c22" stroke-width="3" />
            <path d="M25 37l9 4-9 4z" fill="#a81414" />
            <path d="M4 41V16" stroke="#4a4ad8" stroke-width="3" />
            <path d="M4 11l4 9H0z" fill="#1414a8" />
            <text x="0" y="8" fill="#00f">Z</text>
            <text x="33" y="45" fill="#f00">X</text>
            <text x="0" y="45" fill="#080">Y</text>
          </svg>

          <nav class="taskpane">
            <button v-for="t in taskPane" :key="t" :class="{ active: t === 'ball' }" :aria-label="t">
              <svg viewBox="0 0 20 20" v-html="icons[t]" />
            </button>
          </nav>

          <div class="watermark">
            <p>激活 Windows</p>
            <p>转到“设置”以激活 Windows</p>
          </div>
          <span class="corner"></span>
        </section>
      </div>

      <div class="hud">
        <template v-for="b in hud" :key="b.id">
          <button class="ico" :aria-label="b.id"><svg viewBox="0 0 20 20" v-html="icons[b.id]" /></button>
          <span v-if="b.drop" class="caret"></span>
        </template>
      </div>
      <div class="doccontrols">
        <button v-for="d in docControls" :key="d" :aria-label="d"><svg viewBox="0 0 20 20" v-html="icons[d]" /></button>
      </div>
    </main>
  </div>
</template>

<style>
body {
  margin: 0;
  overflow: hidden;
}
.run-latin {
  font-size: 11px;
}
.tree .run-latin {
  font-size: 13px;
}
.tree .run-angle {
  font-family: 'DejaVu Sans', sans-serif;
  font-size: 11px;
}
</style>

<style scoped>
.app {
  display: flex;
  flex-direction: column;
  height: 100vh;
  overflow: hidden;
  background: #fff;
  color: #000;
  font-family: 'Noto Sans', 'Noto Sans CJK SC', sans-serif;
  font-size: 13px;
  line-height: 16px;
}
.defs {
  position: absolute;
  width: 0;
  height: 0;
}
button {
  display: flex;
  align-items: center;
  justify-content: center;
  margin: 0;
  padding: 0;
  border: 0;
  background: none;
  color: inherit;
  font: inherit;
  white-space: pre;
}
svg {
  flex: none;
  width: 20px;
  height: 20px;
}
input {
  min-width: 0;
  margin: 0;
  padding: 0;
  border: 0;
  outline: 0;
  background: none;
  font: inherit;
}
.ico {
  width: 20px;
  flex: none;
}
.caret,
.drop::after {
  content: '';
  flex: none;
  width: 0;
  height: 0;
  border: 3px solid transparent;
  border-top-color: #3a3a3a;
  border-bottom: 0;
}
.drop {
  width: 19px;
  flex: none;
}
.drop.off::after {
  border-top-color: #aaa;
}

.titlebar {
  display: flex;
  flex: none;
  height: 31px;
  padding-left: 9px;
  border-bottom: 1px solid #808080;
  background: #e5e5e5;
}
.logo {
  display: flex;
  box-sizing: border-box;
  width: 145px;
  height: 31px;
  padding-left: 5px;
  border: 1px solid #b5b5b5;
  border-width: 0 1px 0 1px;
  background: linear-gradient(115deg, #fff 50%, #dedede);
}
.logo svg {
  width: 30px;
  height: 30px;
}
.word {
  padding: 10px 0 0 2px;
  color: #da291c;
  font: 16px/18px Lato, sans-serif;
}
.word b {
  font-weight: 900;
  font-style: italic;
}
.menus {
  display: flex;
  height: 31px;
  padding: 0 4px 0 22px;
  border-bottom: 1px solid #000;
  box-shadow: 2px 0 3px #777;
}
.menus button {
  padding: 0 8px 0 7px;
  height: 27px;
}
.menus .pin {
  padding: 0;
  width: 20px;
  margin: 2px 0 0 18px;
}
.pin svg {
  width: 16px;
  height: 16px;
}
.quick {
  display: flex;
  align-items: center;
  padding-left: 16px;
}
.select {
  box-sizing: border-box;
  width: 25px;
  height: 26px;
  border: 1px solid #999;
}
.select.on {
  border-color: #3c87b5;
  background: #d0d0d0;
}
.select.drop {
  width: 14px;
  border-left: 0;
}
.extra {
  display: flex;
  gap: 5px;
  margin-left: 4px;
}
.extra svg {
  width: 18px;
  height: 18px;
}
h1 {
  flex: 1;
  margin: 0;
  font-size: 13px;
  font-weight: 400;
  line-height: 28px;
  text-align: center;
}
.search {
  display: flex;
  align-items: center;
  box-sizing: border-box;
  width: 202px;
  height: 23px;
  margin-top: 4px;
  padding-left: 3px;
  border: 1px solid #c3c3c3;
  background: #fff;
}
.field {
  position: relative;
  display: flex;
  flex: 1;
  min-width: 0;
  height: 19px;
  margin-left: 1px;
  background: #eef0f5;
}
.field input {
  flex: 1;
}
.hint {
  position: absolute;
  inset: 0 0 0 2px;
  color: #666;
  line-height: 19px;
  white-space: nowrap;
}
.field input:not(:placeholder-shown) + .hint {
  visibility: hidden;
}
.search .ico {
  margin-left: 4px;
}
.search .drop {
  width: 13px;
}
.search .drop::after {
  border-top-color: #777;
}
.wincontrols {
  display: flex;
  align-items: center;
  padding-left: 7px;
  color: #777;
}
.wincontrols .drop {
  width: 16px;
}
.win {
  width: 26px;
}

.toolbar {
  flex: none;
  display: flex;
  height: 31px;
  border-bottom: 1px solid #808080;
  background: #f7f7f7;
}
.toolset {
  display: flex;
  padding-right: 7px;
  border-right: 1px solid #808080;
}
.grip {
  width: 3px;
  margin: 2px 8px 2px 2px;
  background: radial-gradient(circle, #999 1px, transparent 2px) 0 0 / 3px 5px;
}
.toolgroup {
  display: flex;
  align-items: center;
}
.toolgroup + .toolgroup::before {
  content: '';
  width: 1px;
  height: 21px;
  margin: 0 5px 0 2px;
  background: #888;
}
.toolgroup button {
  width: 26px;
}
.toolgroup svg {
  width: 19px;
  height: 19px;
}

.ribbon {
  flex: none;
  display: flex;
  height: 81px;
  border-bottom: 1px solid #808080;
  background: #f7f7f7;
}
.group {
  display: flex;
  margin: 1px 0 2px;
  padding: 0 1px;
  border-right: 1px solid #c3c3c3;
}
.group:last-child {
  border: 0;
}
.cmd {
  flex-direction: column;
  justify-content: flex-start;
  box-sizing: border-box;
  padding: 12px 5px 8px;
  color: #000;
}
.cmd.hasdrop {
  padding-top: 5px;
}
.cmd .caret {
  margin-top: auto;
}
.cap {
  line-height: 13px;
  text-align: center;
}
.cmd.off {
  color: #b5b5b5;
}
.cmd.on {
  padding: 10px 3px 6px;
  border: 2px solid #3c87b5;
  background: #d0d0d0;
}

.workspace {
  position: relative;
  display: flex;
  flex: 1;
  flex-direction: column;
  min-height: 0;
}
.tabs {
  display: flex;
  flex: none;
  height: 22px;
  color: #333;
}
.tabs button {
  box-sizing: border-box;
  min-width: 56px;
  padding: 0 8px 1px;
  border: 1px solid #808080;
  border-width: 0 1px 1px 0;
  background: #d3d3d3;
}
.tabs button:last-child {
  padding: 0 10px 1px;
}
.tabs .active {
  min-width: 55px;
  padding: 0;
  border-bottom: 0;
  background: #f7f7f7;
}
.body {
  display: flex;
  flex: 1;
  min-height: 0;
}
.panel {
  position: relative;
  z-index: 1;
  box-sizing: border-box;
  flex: none;
  width: 293px;
  padding: 2px 2px 0 0;
  border-right: 1px solid #808080;
  background: #f7f7f7;
}
.collapse {
  display: flex;
  align-items: center;
  justify-content: center;
  height: 14px;
  border: 1px solid #c3c3c3;
  border-width: 1px 0;
}
.dot {
  box-sizing: border-box;
  width: 6px;
  height: 6px;
  border: 1px solid #999;
  border-radius: 3px;
  background: #ccc;
}
.paneltabs {
  display: flex;
  box-sizing: border-box;
  height: 26px;
  margin-top: 4px;
  border-bottom: 1px solid #aaa;
}
.paneltabs button {
  box-sizing: border-box;
  width: 40px;
  height: 26px;
  border: 1px solid #808080;
  border-left: 0;
  background: #d3d3d3;
}
.paneltabs .active {
  width: 39px;
  border-bottom: 0;
  background: #f7f7f7;
}
.paneltabs .more {
  width: 20px;
  height: 24px;
  margin-left: auto;
  border: 0;
  background: none;
}
.filter {
  display: flex;
  align-items: center;
  box-sizing: border-box;
  height: 26px;
  margin: 0 1px 0 2px;
  border: 1px solid #c3c3c3;
}
.filter .caret {
  margin: 6px 2px 0 0;
}
.filter input {
  flex: 1;
}
.tree {
  margin: 0;
  padding: 0;
  overflow: hidden;
  list-style: none;
  font-size: 12px;
}
.tree li {
  display: flex;
  align-items: center;
  height: 22px;
}
.tree li svg {
  width: 19px;
  height: 19px;
}
.name {
  margin-left: 4px;
  white-space: pre;
}
.tree .root {
  padding-left: 1px;
}
.arrow,
.noarrow {
  flex: none;
  width: 24px;
}
.arrow {
  justify-content: flex-start;
  padding-left: 7px;
}
.arrow::after {
  content: '';
  border: 4px solid transparent;
  border-left-color: #555;
  border-right: 0;
}
.rollback {
  height: 1px;
  border-top: 2px solid #3a8fd0;
  background: #1c1ca0;
}
.handle {
  position: absolute;
  top: 388px;
  left: 292px;
  display: flex;
  align-items: center;
  box-sizing: border-box;
  width: 9px;
  height: 39px;
  border: 1px solid #999;
  border-left: 0;
  background: #f7f7f7;
}

.stage {
  position: relative;
  display: flex;
  flex: 1;
  align-items: center;
  justify-content: center;
  min-width: 0;
  background: #fff;
}
.model {
  width: 951px;
  height: 240px;
}
.triad {
  position: absolute;
  bottom: 30px;
  left: 37px;
  width: 44px;
  height: 48px;
  font: 10px 'DejaVu Sans', sans-serif;
}
.taskpane {
  position: absolute;
  top: 37px;
  right: 0;
  border: 1px solid #808080;
  border-width: 1px 0 0 1px;
}
.taskpane button {
  box-sizing: border-box;
  width: 24px;
  height: 24px;
  border-bottom: 1px solid #808080;
  background: #d3d3d3;
}
.taskpane .active {
  background: #f7f7f7;
}
.watermark {
  position: absolute;
  bottom: -10px;
  left: calc(100% - 289px);
  color: #bdbdbd;
  white-space: nowrap;
}
.watermark p {
  margin: 0;
  font-size: 20px;
  line-height: 28px;
}
.watermark p + p {
  font-size: 15px;
  line-height: 24px;
}
.corner {
  position: absolute;
  right: 2px;
  bottom: -3px;
  width: 6px;
  height: 6px;
  border-radius: 3px;
  background: #48586a;
}
.hud {
  position: absolute;
  top: 5px;
  right: 0;
  left: 289px;
  display: flex;
  align-items: center;
  justify-content: center;
  gap: 6px;
}
.hud .caret {
  margin-right: 2px;
  border-top-color: #999;
}
.doccontrols {
  position: absolute;
  top: 5px;
  right: 5px;
  display: flex;
  color: #999;
}
.doccontrols button {
  width: 26px;
}
</style>
